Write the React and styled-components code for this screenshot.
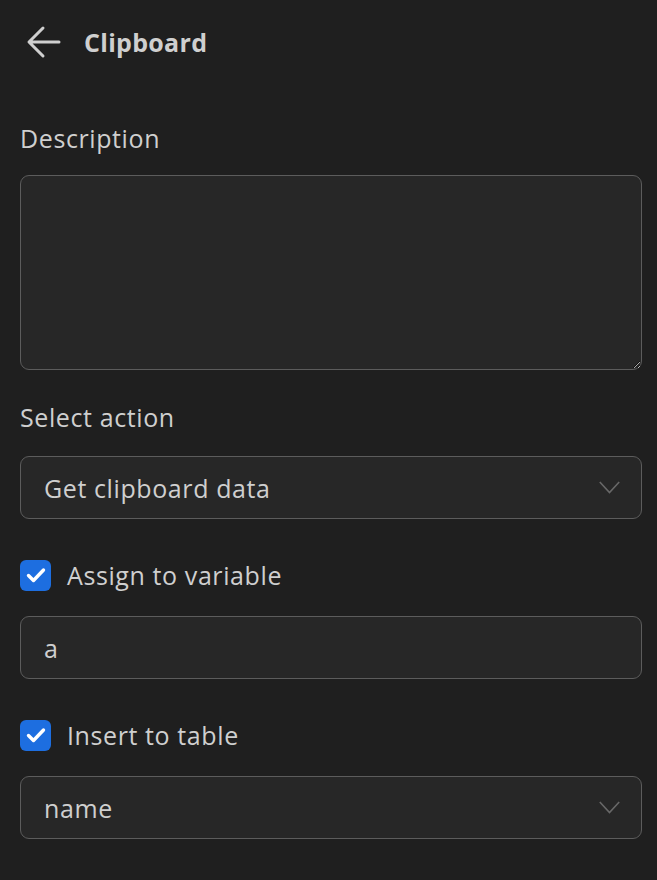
import React from "react";
import styled, { createGlobalStyle } from "styled-components";

const Global = createGlobalStyle`
	html, body {
		margin: 0;
		padding: 0;
		background: #1f1f1f;
	}
	body {
		font-family: "Open Sans", "Noto Sans", sans-serif;
		color: #cfcfcf;
		letter-spacing: 0.6px;
	}
`;

const Panel = styled.div`
	width: 657px;
	height: 880px;
	box-sizing: border-box;
	padding: 0 15px 0 20px;
	background: #1f1f1f;
	display: flex;
	flex-direction: column;
`;

const Header = styled.div`
	display: flex;
	align-items: center;
	gap: 22px;
	height: 84px;
	padding-left: 6px;
`;

const Title = styled.h1`
	margin: 0;
	font-size: 25px;
	font-weight: 700;
	letter-spacing: 0.3px;
	color: #cfcfcf;
`;

const Label = styled.div`
	font-size: 25px;
	line-height: 32px;
	color: #cfcfcf;
	margin-top: ${({ top }) => top || 0}px;
	margin-bottom: ${({ bottom }) => bottom || 21}px;
`;

const TextArea = styled.textarea`
	display: block;
	width: 100%;
	height: 195px;
	box-sizing: border-box;
	background: #272727;
	border: 1.5px solid #5c5c5c;
	border-radius: 9px;
	resize: vertical;
	color-scheme: dark;
	color: #cfcfcf;
	font: inherit;
	font-size: 25px;
	padding: 12px 22px;
	outline: none;
`;

const Field = styled.div`
	display: flex;
	align-items: center;
	justify-content: space-between;
	height: 63px;
	box-sizing: border-box;
	background: #272727;
	border: 1.5px solid #5c5c5c;
	border-radius: 9px;
	padding: 0 21px 0 23px;
	font-size: 25px;
	color: #cfcfcf;
`;

const CheckRow = styled.label`
	display: flex;
	align-items: center;
	gap: 16px;
	font-size: 25px;
	color: #cfcfcf;
	margin-top: ${({ top }) => top}px;
	margin-bottom: 24px;
`;

const Box = styled.span`
	width: 31px;
	height: 31px;
	border-radius: 6px;
	background: #1d6ee0;
	display: flex;
	align-items: center;
	justify-content: center;
	flex: none;
`;

const BackArrow = () => (
	<svg width="36" height="36" viewBox="0 0 36 36" fill="none" stroke="#cfcfcf" strokeWidth="3" strokeLinecap="round" strokeLinejoin="round">
		<path d="M33 18H4M17 4L3 18l14 14" />
	</svg>
);

const Chevron = () => (
	<svg width="21" height="13" viewBox="0 0 21 13" fill="none" stroke="#686868" strokeWidth="1.6">
		<path d="M0.8 1l9.7 10.5L20.2 1" />
	</svg>
);

const Check = () => (
	<svg width="20" height="16" viewBox="0 0 20 16" fill="none" stroke="#fff" strokeWidth="3.4" strokeLinecap="round" strokeLinejoin="round">
		<path d="M2.5 8.5l5 5L17.5 3" />
	</svg>
);

export default function App() {
	return (
		<>
			<Global />
			<Panel>
				<Header>
					<BackArrow />
					<Title>Clipboard</Title>
				</Header>
				<Label top={38}>Description</Label>
				<TextArea />
				<Label top={31} bottom={23}>Select action</Label>
				<Field>
					<span>Get clipboard data</span>
					<Chevron />
				</Field>
				<CheckRow top={39}>
					<Box><Check /></Box>
					Assign to variable
				</CheckRow>
				<Field>
					<span>a</span>
				</Field>
				<CheckRow top={39}>
					<Box><Check /></Box>
					Insert to table
				</CheckRow>
				<Field>
					<span>name</span>
					<Chevron />
				</Field>
			</Panel>
		</>
	);
}
